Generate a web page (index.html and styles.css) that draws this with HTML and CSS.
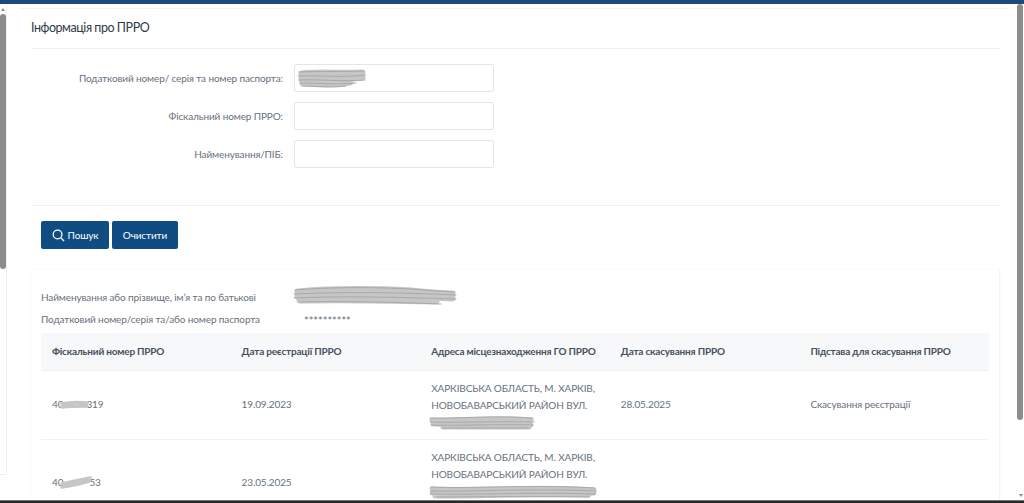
FILE: index.html
```html
<!DOCTYPE html>
<html lang="uk">
<head>
<meta charset="utf-8">
<title>Інформація про ПРРО</title>
<link rel="stylesheet" href="styles.css">
</head>
<body>
<div class="topbar"></div>
<div class="shell">
  <div class="scroll scroll-left"><span class="arrow arrow-up"></span><div class="thumb thumb-left"></div></div>
  <main class="page">
    <div class="panel">
      <h1 class="title">Інформація про ПРРО</h1>
      <form class="form">
        <div class="field">
          <label class="label">Податковий номер/ серія та номер паспорта:</label>
          <div class="input input-filled">
            <svg class="scribble scribble-input" viewBox="0 0 72 22" width="72" height="22"><path class="blot" d="M6 6 C24 4 44 6 66 5 M6 11 C24 10 44 12 66 9 M7 15 C24 16 38 17 54 14"/><path class="hatch" d="M3 4 C24 3 44 4 68 3 M2 8 C24 7 44 10 69 7 M3 12 C24 11 44 14 69 12 M4 15 C24 15 40 17 60 15 M7 18 C24 18 34 20 50 18"/></svg>
          </div>
        </div>
        <div class="field">
          <label class="label">Фіскальний номер ПРРО:</label>
          <div class="input"></div>
        </div>
        <div class="field">
          <label class="label">Найменування/ПІБ:</label>
          <div class="input"></div>
        </div>
      </form>
      <div class="actions">
        <button type="button" class="btn btn-search">
          <svg class="btn-icon" viewBox="0 0 14 14" width="13" height="13"><circle cx="6" cy="6" r="4.7"/><path d="M9.6 9.6 L13 13"/></svg>
          Пошук
        </button>
        <button type="button" class="btn">Очистити</button>
      </div>
      <section class="card">
        <div class="info">
          <div class="info-row info-name">
            <span class="info-label">Найменування або прізвище, ім’я та по батькові</span>
            <svg class="scribble scribble-name" viewBox="0 0 168 22" width="168" height="22"><path class="blot" d="M7 7 C40 4 80 4 120 6 C140 8 150 9 161 9 M7 11 C50 9 100 9 161 13 M9 15 C50 14 100 15 145 16"/><path class="hatch" d="M4 5 C40 2 80 2 120 4 C140 6 150 6 164 7 M3 9 C50 7 100 7 165 10 M3 13 C50 11 100 12 165 14 M8 17 C50 16 100 17 150 19"/></svg>
          </div>
          <div class="info-row info-tax">
            <span class="info-label">Податковий номер/серія та/або номер паспорта</span>
            <span class="stars">**********</span>
          </div>
        </div>
        <table class="table">
          <thead>
            <tr>
              <th>Фіскальний номер ПРРО</th>
              <th>Дата реєстрації ПРРО</th>
              <th>Адреса місцезнаходження ГО ПРРО</th>
              <th>Дата скасування ПРРО</th>
              <th>Підстава для скасування ПРРО</th>
            </tr>
          </thead>
          <tbody>
            <tr>
              <td><span class="masked">40<svg class="scribble scribble-num" viewBox="0 0 29 12" width="29" height="12"><path class="blot" d="M2 5 C10 3 18 3 27 4 M2 8 C10 7 18 7 27 7"/></svg>319</span></td>
              <td>19.09.2023</td>
              <td>ХАРКІВСЬКА ОБЛАСТЬ, М. ХАРКІВ, НОВОБАВАРСЬКИЙ РАЙОН ВУЛ.<br>
                <svg class="scribble scribble-addr" viewBox="0 0 106 17" width="106" height="17"><path class="blot" d="M3 7 C30 8 60 4 102 7 M4 11 C30 12 60 10 102 12 M14 14 C40 14 70 14 100 14"/><path class="hatch" d="M1 5 C30 6 60 2 104 5 M1 9 C30 10 60 8 105 9 M2 12 C30 13 60 11 104 12 M14 15 C40 15 70 15 100 15"/></svg></td>
              <td>28.05.2025</td>
              <td>Скасування реєстрації</td>
            </tr>
            <tr>
              <td><span class="masked">40<svg class="scribble scribble-num" viewBox="0 0 32 14" width="32" height="14"><path class="blot" d="M2 9 C10 7 20 5 30 3 M2 12 C10 11 20 9 29 6"/></svg>53</span></td>
              <td>23.05.2025</td>
              <td class="addr-long">ХАРКІВСЬКА ОБЛАСТЬ, М. ХАРКІВ, НОВОБАВАРСЬКИЙ РАЙОН ВУЛ.<br>
                <svg class="scribble scribble-addr" viewBox="0 0 168 17" width="168" height="17"><path class="blot" d="M3 7 C50 9 100 4 165 8 M3 11 C50 12 100 8 165 11 M6 14 C50 14 100 12 160 13"/><path class="hatch" d="M2 5 C50 7 100 2 166 6 M2 9 C50 10 100 6 167 9 M2 12 C50 13 100 10 166 12 M8 15 C50 15 100 14 160 15"/></svg></td>
              <td></td>
              <td></td>
            </tr>
          </tbody>
        </table>
      </section>
    </div>
  </main>
  <div class="scroll scroll-right"><div class="thumb thumb-right"></div><span class="arrow arrow-down"></span></div>
</div>
<div class="bottombar"></div>
</body>
</html>
```
FILE: styles.css
```css
* { box-sizing: border-box; }
html, body { margin: 0; height: 100%; overflow: hidden; }
body {
  display: flex;
  flex-direction: column;
  height: 503px;
  background: #fff;
  font-family: Lato, "Open Sans", sans-serif;
  font-size: 10px;
  letter-spacing: -0.12px;
  color: #67717d;
}
.topbar { flex: 0 0 4px; background: #1d4a7a; }
.bottombar { flex: 0 0 3px; background: #2b2622; border-top: 1px solid #777; }
.shell { flex: 1; display: flex; min-height: 0; overflow: hidden; }
.scroll { flex: none; position: relative; display: flex; flex-direction: column; }
.scroll-left { width: 7px; height: 471px; padding-top: 10px; border-right: 1px solid #f0f0f0; border-bottom: 1px solid #eee; }
.scroll-right { width: 8px; padding-left: 1px; }
.thumb { background: #8c8c8c; border-radius: 3px; }
.thumb-left { width: 6px; height: 255px; }
.thumb-right { width: 6px; height: 416px; }
.arrow { position: absolute; width: 0; height: 0; border-left: 2px solid transparent; border-right: 2px solid transparent; }
.arrow-up { top: 4px; left: 1px; border-bottom: 3px solid #8c8c8c; }
.arrow-down { bottom: 3px; right: 1px; border-top: 3px solid #8c8c8c; }
.page { flex: 1; min-width: 0; padding: 4px 7px 0 13px; }
.panel { height: 100%; padding: 0 9px 0 11px; border-top: 1px solid #f2f3f4; }
.title {
  margin: 0;
  height: 40px;
  padding-top: 10px;
  font-size: 12.5px;
  font-weight: 400;
  letter-spacing: -0.45px;
  line-height: 18px;
  color: #2f3a46;
  border-bottom: 1px solid #eef0f2;
}
.form { display: flex; flex-direction: column; gap: 10px; padding: 15px 0 37px; border-bottom: 1px solid #eef0f2; }
.field { display: flex; align-items: center; gap: 11px; }
.label { width: 252px; text-align: right; }
.input { position: relative; width: 200px; height: 28px; border: 1px solid #e2e6ea; border-radius: 2px; background: #fff; }
.actions { display: flex; gap: 3px; padding: 15px 0 21px 10px; }
.btn {
  display: flex;
  align-items: center;
  justify-content: center;
  gap: 3px;
  width: 66px;
  height: 28px;
  padding: 0;
  border: 0;
  border-radius: 2px;
  background: #0f4c81;
  color: #fff;
  font: 400 10px Lato, sans-serif;
  letter-spacing: -0.12px;
}
.btn-search { width: 68px; }
.btn-icon { fill: none; stroke: #fff; stroke-width: 1.4; }
.card { width: 969px; height: 230px; padding: 0 10px; box-shadow: 0 0 3px rgba(0,0,0,.05); border-right: 1px solid #f3f3f3; overflow: hidden; }
.info { padding-top: 16px; height: 63px; }
.info-row { position: relative; display: flex; align-items: center; height: 22px; }
.stars { position: absolute; left: 263px; top: 6px; font-size: 11px; letter-spacing: 0; }
.scribble { fill: none; stroke-linecap: round; filter: blur(.35px); }
.blot { stroke: #c6c6c6; stroke-width: 7; }
.hatch { stroke: #a9a9a9; stroke-width: 1; }
.scribble-input { position: absolute; left: 1px; top: 3px; }
.scribble-name { position: absolute; left: 250px; top: -1px; }
.masked { display: inline-flex; align-items: center; }
.scribble-num { margin: 0 -3px; }
.scribble-num .blot { stroke-width: 3.5; }
.scribble-addr { display: block; margin: -1px 0 0 -2px; }
.scribble-addr .blot { stroke-width: 5; }
.table { width: 948px; border-collapse: collapse; table-layout: fixed; }
.table th {
  height: 37px;
  padding: 0 4px 0 11px;
  text-align: left;
  font-weight: 700;
  font-size: 10px;
  letter-spacing: -0.2px;
  color: #46505c;
  background: #f6f8fa;
  border-bottom: 1px solid #eef0f2;
}
.table td {
  padding: 9px 8px 9px 11px;
  line-height: 17px;
  vertical-align: middle;
  border-bottom: 1px solid #f0f2f4;
}
.table .addr-long { padding-bottom: 26px; }
```
